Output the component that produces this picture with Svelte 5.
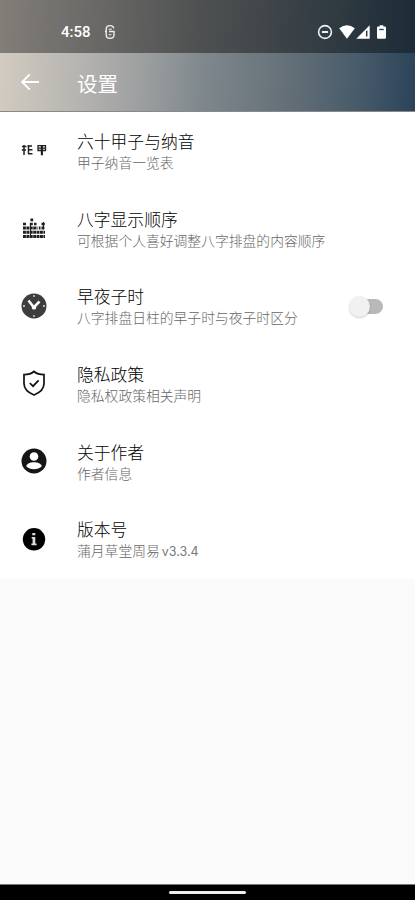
<script>
  const rows = [
    { icon: 'jiazi', title: '六十甲子与纳音', summary: '甲子纳音一览表' },
    { icon: 'grid', title: '八字显示顺序', summary: '可根据个人喜好调整八字排盘的内容顺序' },
    { icon: 'clock', title: '早夜子时', summary: '八字排盘日柱的早子时与夜子时区分', toggle: true },
    { icon: 'shield', title: '隐私政策', summary: '隐私权政策相关声明' },
    { icon: 'person', title: '关于作者', summary: '作者信息' },
    { icon: 'info', title: '版本号', summary: '蒲月草堂周易', version: 'v3.3.4' }
  ];
  let enabled = $state(false);
</script>

<div class="screen">
  <header>
    <div class="status">
      <span class="time">4:58</span>
      <svg class="app-badge" width="12" height="16" viewBox="0 0 12 16" fill="none" stroke="#eee" stroke-width="1.4">
        <path d="M9.800 4.300C9.500 2.400 8.300 1.600 6 1.600C3.400 1.600 2.200 2.800 2.200 5V11C2.200 13.200 3.500 14.300 6 14.300C8.700 14.300 10 13.200 10 11V7.500H5M1 7.500H3" />
        <path d="M4.500 5.200H8M4.500 10.700H7.500" stroke-width="1" />
      </svg>
      <div class="system">
        <svg width="16" height="16" viewBox="0 0 16 16" fill="none" stroke="#eef1f2">
          <circle cx="8" cy="8" r="6.400" stroke-width="1.600" />
          <path d="M4.900 8H11.100" stroke-width="2" />
        </svg>
        <svg class="wifi" width="16" height="14" viewBox="0 0 16 14" fill="#fff"><path d="M.2 3.300Q8-2.600 15.800 3.300L8 13.700Z" /></svg>
        <svg class="signal" width="14" height="14" viewBox="0 0 14 14">
          <path d="M.3 13.700L13.700.3V13.700Z" fill="#fff" />
          <path d="M10.700 5.700V11.500" stroke="#303a42" stroke-width="1.500" />
        </svg>
        <svg class="battery" width="9" height="14" viewBox="0 0 10 15">
          <path d="M3 0H7V1.500H8.700Q10 1.500 10 2.800V13.600Q10 15 8.600 15H1.400Q0 15 0 13.600V2.800Q0 1.500 1.300 1.500H3Z" fill="#fff" />
          <path d="M2.500 4.700H7.500" stroke="#343e45" stroke-width="1.500" />
        </svg>
      </div>
    </div>
    <div class="toolbar">
      <svg width="20" height="18" viewBox="0 0 20 18" fill="none" stroke="#fff" stroke-width="1.900"><path d="M19 9H2.500M9.800 1.300L2.100 9L9.800 16.700" /></svg>
      <h1>设置</h1>
    </div>
  </header>

  <main>
    {#each rows as row}
      <section class="row">
        <div class="icon">
          {#if row.icon === 'jiazi'}
            <svg width="28" height="28" viewBox="0 0 28 28" fill="none" stroke="#222" stroke-width="1.500">
              <path d="M2 10.500H6.500M4 9V19M1.800 14H6M7.500 10H12M8.500 9V18M8 13.800H12.500M8 17.800H12.500" />
              <path d="M18 9.700H25.500V14.500H18ZM18 12.100H25.500" stroke-width="1.300" />
              <path d="M21.900 9.700V19.300" stroke-width="2.200" />
            </svg>
          {:else if row.icon === 'grid'}
            <svg width="28" height="28" viewBox="0 0 28 28" fill="none" stroke="#202020">
              <path d="M11.800 4.500V7.300" stroke-width="2.800" />
              <path d="M3 10H6M9.800 10H12.800M14 10H16.500M21.500 10H24.800" stroke-width="2.600" />
              <path d="M3 14H17.500M18.800 14H20.500M21.500 14H24.800M3 18.200H25M3 22.500H25" stroke-width="3" stroke-dasharray="2.900 .5" />
              <path d="M10.500 11V23M23.500 8V15" stroke-width="1" />
            </svg>
          {:else if row.icon === 'clock'}
            <svg width="28" height="28" viewBox="0 0 28 28">
              <circle cx="14" cy="14" r="12.500" fill="#3d3d3d" />
              <path d="M8.500 8.500L13.800 15.300L19.500 9.500" fill="none" stroke="#fff" stroke-width="2.500" />
              <circle cx="14" cy="15.400" r="2.200" fill="#fff" />
              <path d="M14 3V5M14 23V25M3 14H5M23 14H25" stroke="#ddd" stroke-width="1.300" />
            </svg>
          {:else if row.icon === 'shield'}
            <svg width="28" height="28" viewBox="0 0 28 28" fill="none" stroke="#111" stroke-width="1.700">
              <path d="M14 2.500C11.500 4.700 7.500 5.600 4 5.600V14.500C4 20 8 23.500 14 26C20 23.500 24 20 24 14.500V5.600C20.500 5.600 16.500 4.700 14 2.500Z" />
              <path d="M9.800 14L13 17.200L18.600 11.300" />
            </svg>
          {:else if row.icon === 'person'}
            <svg width="28" height="28" viewBox="0 0 28 28">
              <circle cx="14" cy="14" r="12.500" fill="#151515" />
              <circle cx="14" cy="9.500" r="4.300" fill="#fff" />
              <path d="M6.200 19.300C7.500 13.900 20.500 13.900 21.800 19.300C18.200 23.200 9.800 23.200 6.200 19.300Z" fill="#fff" />
            </svg>
          {:else}
            <svg width="28" height="28" viewBox="0 0 28 28">
              <circle cx="14" cy="14.300" r="11.200" fill="#000" />
              <path d="M12.300 8.100H15.300V10.300H12.300ZM11.700 11.900H15.300V18.500H16.600V20.300H11.400V18.500H12.600V13.700H11.700Z" fill="#ddd" />
            </svg>
          {/if}
        </div>
        <div class="copy">
          <div class="title">{row.title}</div>
          <div class="summary">{row.summary}{#if row.version}<span>{row.version}</span>{/if}</div>
        </div>
        {#if row.toggle}
          <button class="switch" class:on={enabled} aria-label={row.title} onclick={() => (enabled = !enabled)}><i></i></button>
        {/if}
      </section>
    {/each}
  </main>
  <footer><i></i></footer>
</div>

<style>
  .screen {
    width: 100%;
    height: 900px;
    display: flex;
    flex-direction: column;
    overflow: hidden;
    background: #fafafa;
    font-family: "Roboto", "Noto Sans CJK SC", sans-serif;
  }
  header { height: 112px; flex: none; }
  .status {
    height: 53px;
    box-sizing: border-box;
    padding: 11px 29px 0 61px;
    display: flex;
    align-items: center;
    background: linear-gradient(93deg, #827e78 0%, #686765 25%, #4d5050 49%, #3c4348 68%, #2a363e 86%, #1c2c38 100%);
  }
  .time { width: 30px; color: #fff; font-size: 15px; font-weight: 500; line-height: 18px; white-space: nowrap; }
  .app-badge { margin-left: 13px; }
  .system { margin-left: auto; display: flex; align-items: center; }
  .wifi { margin-left: 6px; }
  .signal { margin-left: 1px; }
  .battery { margin-left: 7px; }
  .toolbar {
    height: 59px;
    box-sizing: border-box;
    padding-left: 20px;
    display: flex;
    align-items: center;
    background: linear-gradient(93deg, #d2cbc0 0%, #b9b7b3 17%, #9b9e9f 35%, #7d868b 50%, #647078 69%, #485b6a 86%, #2b4359 100%);
    border-bottom: 1px solid #89898a;
  }
  h1 { margin: 0 0 0 37px; padding-top: 5px; color: #fff; font-size: 20.500px; line-height: 28px; font-weight: 400; }
  main { flex: none; padding-bottom: 1px; background: #fff; }
  .row { height: 77.700px; display: flex; align-items: center; }
  .icon { width: 28px; height: 28px; flex: none; margin: 0 29px 1px 20px; }
  svg { display: block; flex: none; }
  .copy { flex: 1; padding-top: 3.400px; white-space: nowrap; }
  .title { font-size: 16.800px; line-height: 21px; font-weight: 300; color: #000; }
  .summary { font-size: 13.800px; line-height: 20px; font-weight: 300; color: #666; }
  .summary span { margin-left: 2px; font-family: "Inter", sans-serif; font-size: 12.500px; font-weight: 400; color: #777; }
  .switch {
    position: relative;
    width: 34px;
    height: 22px;
    flex: none;
    margin: 0 32px 0 0;
    padding: 0 0 0 6px;
    border: 0;
    display: flex;
    align-items: center;
    background: none;
  }
  .switch::before { content: ""; width: 28px; height: 15px; border-radius: 8px; background: #b9b9b9; }
  .switch i {
    position: absolute;
    left: 0;
    top: 1px;
    width: 21px;
    height: 21px;
    border-radius: 50%;
    background: #f1f1f1;
    box-shadow: 0 1px 2px #0003;
  }
  .switch.on i { left: 13px; }
  footer {
    height: 16px;
    flex: none;
    margin-top: auto;
    box-sizing: border-box;
    display: flex;
    justify-content: center;
    background: #000;
    border-top: 1px solid #777;
  }
  footer i { width: 77px; height: 3px; margin-top: 6px; border-radius: 2px; background: #eee; }
</style>
